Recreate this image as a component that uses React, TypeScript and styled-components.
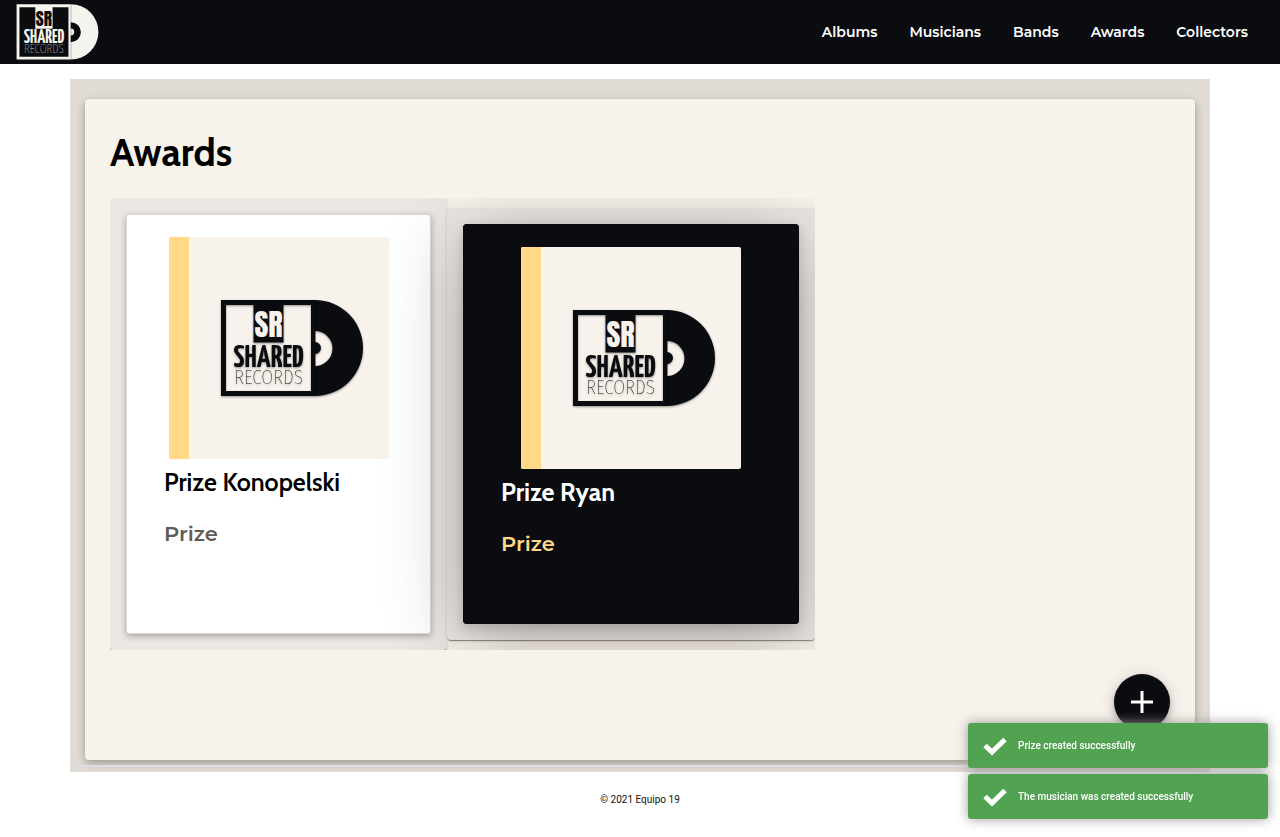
import React from "react";
import styled, { createGlobalStyle, css } from "styled-components";

const INK = "#0a0c10";
const CREAM = "#f7f2eb";
const SAND = "#e0dbd5";
const AMBER = "#ffd888";

const body = `Montserrat, "Open Sans", "Noto Sans", sans-serif`;
const display = `Cabin, Lato, "Open Sans", sans-serif`;

const GlobalStyle = createGlobalStyle`
  *, *::before, *::after { box-sizing: border-box; }
  body { margin: 0; background: #fff; color: #000; font-family: ${body}; }
  h1, h2, p { margin: 0; }
`;

const Header = styled.header`
  display: flex;
  align-items: center;
  justify-content: space-between;
  height: 64px;
  padding: 0 16px;
  background: ${INK};
`;

const HomeLink = styled.a`
  display: flex;
`;

const HeaderLogo = styled.svg`
  display: block;
  width: 83px;
  height: 57px;
`;

const Nav = styled.nav`
  display: flex;
`;

const NavLink = styled.a`
  padding: 0 16px;
  color: #fff;
  font: 600 14px/36px ${body};
  text-decoration: none;
  border-radius: 4px;
  box-shadow: 0 0 2px rgba(0, 0, 0, 0.4);
`;

const Page = styled.main`
  max-width: 1140px;
  margin: 15px auto 0;
  padding: 20px 5px 5px;
  background: ${SAND};
`;

const Panel = styled.section`
  display: flex;
  flex-direction: column;
  margin: 0 10px;
  padding: 25px 25px 30px;
  background: ${CREAM};
  border-radius: 4px;
  box-shadow: 0 3px 8px rgba(0, 0, 0, 0.32);
`;

const Title = styled.h1`
  margin-bottom: 18px;
  font: 700 39px/56px ${display};
`;

const Rule = styled.div`
  height: 2px;
  margin-top: 5px;
  background: #dadbe3;
`;

const CardRow = styled.div`
  display: flex;
  align-self: flex-start;
  align-items: center;
  max-width: 100%;
  overflow: hidden;
`;

const CardFrame = styled.article<{ $active?: boolean }>`
  width: ${(p) => (p.$active ? 368 : 337)}px;
  padding: 16px;
  background: #ebe8e3;
  border-radius: 4px;
  box-shadow: 0 2px 1px -1px rgba(0, 0, 0, 0.3), 0 1px 1px rgba(0, 0, 0, 0.14),
    0 1px 3px rgba(0, 0, 0, 0.12);
`;

const Card = styled.div<{ $active?: boolean }>`
  display: flex;
  flex-direction: column;
  min-height: 420px;
  padding: 22px 37px;
  border: 1px solid #d8d8d8;
  border-radius: 3px;
  background: #fff;
  box-shadow: 0 2px 6px rgba(0, 0, 0, 0.3);
  ${(p) =>
    p.$active &&
    css`
      min-height: 400px;
      border-color: ${INK};
      background: ${INK};
      box-shadow: 0 14px 80px rgba(20, 8, 8, 0.3), 0 4px 12px rgba(0, 0, 0, 0.16);
    `}
`;

const Cover = styled.svg`
  display: block;
  align-self: center;
  width: 220px;
  height: 222px;
  border-radius: 2px;
  background: ${CREAM};
`;

const CardName = styled.h2<{ $active?: boolean }>`
  margin-top: 6px;
  font: ${(p) => (p.$active ? 700 : 600)} 25px/34px ${display};
  color: ${(p) => (p.$active ? "#fff" : "#000")};
`;

const CardKind = styled.p<{ $active?: boolean }>`
  margin-top: 20px;
  font: 600 21px/30px ${body};
  color: ${(p) => (p.$active ? AMBER : "#5f5b56")};
`;

const AddButton = styled.button`
  display: flex;
  align-items: center;
  justify-content: center;
  align-self: flex-end;
  width: 56px;
  height: 56px;
  margin-top: 24px;
  padding: 0;
  border: 0;
  border-radius: 50%;
  background: ${INK};
  color: #fff;
  box-shadow: 0 3px 5px -1px rgba(0, 0, 0, 0.2), 0 6px 10px rgba(0, 0, 0, 0.14),
    0 1px 18px rgba(0, 0, 0, 0.12);
`;

const Footer = styled.footer`
  padding: 20px 16px;
  color: #111;
  font: 400 10px/16px Roboto, sans-serif;
  text-align: center;
`;

const Toasts = styled.div`
  position: fixed;
  right: 12px;
  bottom: 18px;
  display: flex;
  flex-direction: column;
  gap: 6px;
`;

const Toast = styled.div`
  display: flex;
  align-items: center;
  gap: 10px;
  width: 300px;
  height: 45px;
  padding: 0 15px;
  border-radius: 3px;
  background: #51a351;
  box-shadow: 0 0 12px #999;
  color: #fff;
  font: 500 10px/15px Roboto, sans-serif;
`;

const Inked = styled.g<{ $shadow?: boolean }>`
  filter: ${(p) => (p.$shadow ? "drop-shadow(0 1px 1px rgba(0, 0, 0, 0.4))" : "none")};
`;

/* Square sleeve with the record sliding out of its right side. */
function LogoMark({ ink, paper, shadow }: { ink: string; paper: string; shadow?: boolean }) {
  return (
    <g textAnchor="middle">
      <Inked $shadow={shadow} fill={ink}>
        <path
          fillRule="evenodd"
          d="M0 0H94A48 48 0 0 1 94 96H0ZM5 5V91H90V5H62.5V42.5H32.5V5ZM94 31A17.5 17.5 0 0 1 94 66ZM94 42A6 6 0 0 1 94 54Z"
        />
        <text x="47.5" y="67" fontSize="32" fontWeight="700" fontFamily={`"Yanone Kaffeesatz", "Roboto Condensed", sans-serif`}>
          SHARED
        </text>
        <text x="47.5" y="84" fontSize="21" fontWeight="200" fontFamily={`"Fira Sans Extra Condensed", "Roboto Condensed", sans-serif`}>
          RECORDS
        </text>
      </Inked>
      <path d="M94.5 0V96" stroke="#000" strokeOpacity="0.4" />
      <text x="47.5" y="37" fontSize="30" fill={paper} fontFamily={`Anton, "Roboto Condensed", sans-serif`}>
        SR
      </text>
    </g>
  );
}

function AlbumCover() {
  return (
    <Cover viewBox="0 0 220 222" role="img" aria-label="Shared Records">
      <rect width="20" height="222" fill={AMBER} />
      <g transform="translate(52 63)">
        <LogoMark ink={INK} paper={CREAM} shadow />
      </g>
    </Cover>
  );
}

function AwardCard({ name, kind, active }: { name: string; kind: string; active?: boolean }) {
  return (
    <CardFrame $active={active}>
      <Card $active={active}>
        <AlbumCover />
        <CardName $active={active}>{name}</CardName>
        <CardKind $active={active}>{kind}</CardKind>
      </Card>
    </CardFrame>
  );
}

const CheckIcon = () => (
  <svg width="25" height="20" viewBox="0 0 25 20" aria-hidden="true">
    <path d="M2 9.5L9 16L22 3.5" fill="none" stroke="#fff" strokeWidth="5" />
  </svg>
);

const sections = ["Albums", "Musicians", "Bands", "Awards", "Collectors"];
const awards = [
  { name: "Prize Konopelski", kind: "Prize" },
  { name: "Prize Ryan", kind: "Prize", active: true },
];
const messages = ["Prize created successfully", "The musician was created successfully"];

export default function App() {
  return (
    <>
      <GlobalStyle />
      <Header>
        <HomeLink href="#home" aria-label="Shared Records">
          <HeaderLogo viewBox="-1 0 144 98">
            <LogoMark ink="#f5f3ee" paper={INK} />
          </HeaderLogo>
        </HomeLink>
        <Nav>
          {sections.map((label) => (
            <NavLink key={label} href={`#${label.toLowerCase()}`}>
              {label}
            </NavLink>
          ))}
        </Nav>
      </Header>
      <Page>
        <Panel>
          <Title>Awards</Title>
          <CardRow>
            {awards.map((award) => (
              <AwardCard key={award.name} {...award} />
            ))}
          </CardRow>
          <AddButton type="button" aria-label="Add award">
            <svg width="22" height="22" viewBox="0 0 22 22" aria-hidden="true">
              <path d="M11 0V22M0 11H22" stroke="currentColor" strokeWidth="3" />
            </svg>
          </AddButton>
        </Panel>
        <Rule />
      </Page>
      <Footer>© 2021 Equipo 19</Footer>
      <Toasts role="status">
        {messages.map((message) => (
          <Toast key={message}>
            <CheckIcon />
            {message}
          </Toast>
        ))}
      </Toasts>
    </>
  );
}
